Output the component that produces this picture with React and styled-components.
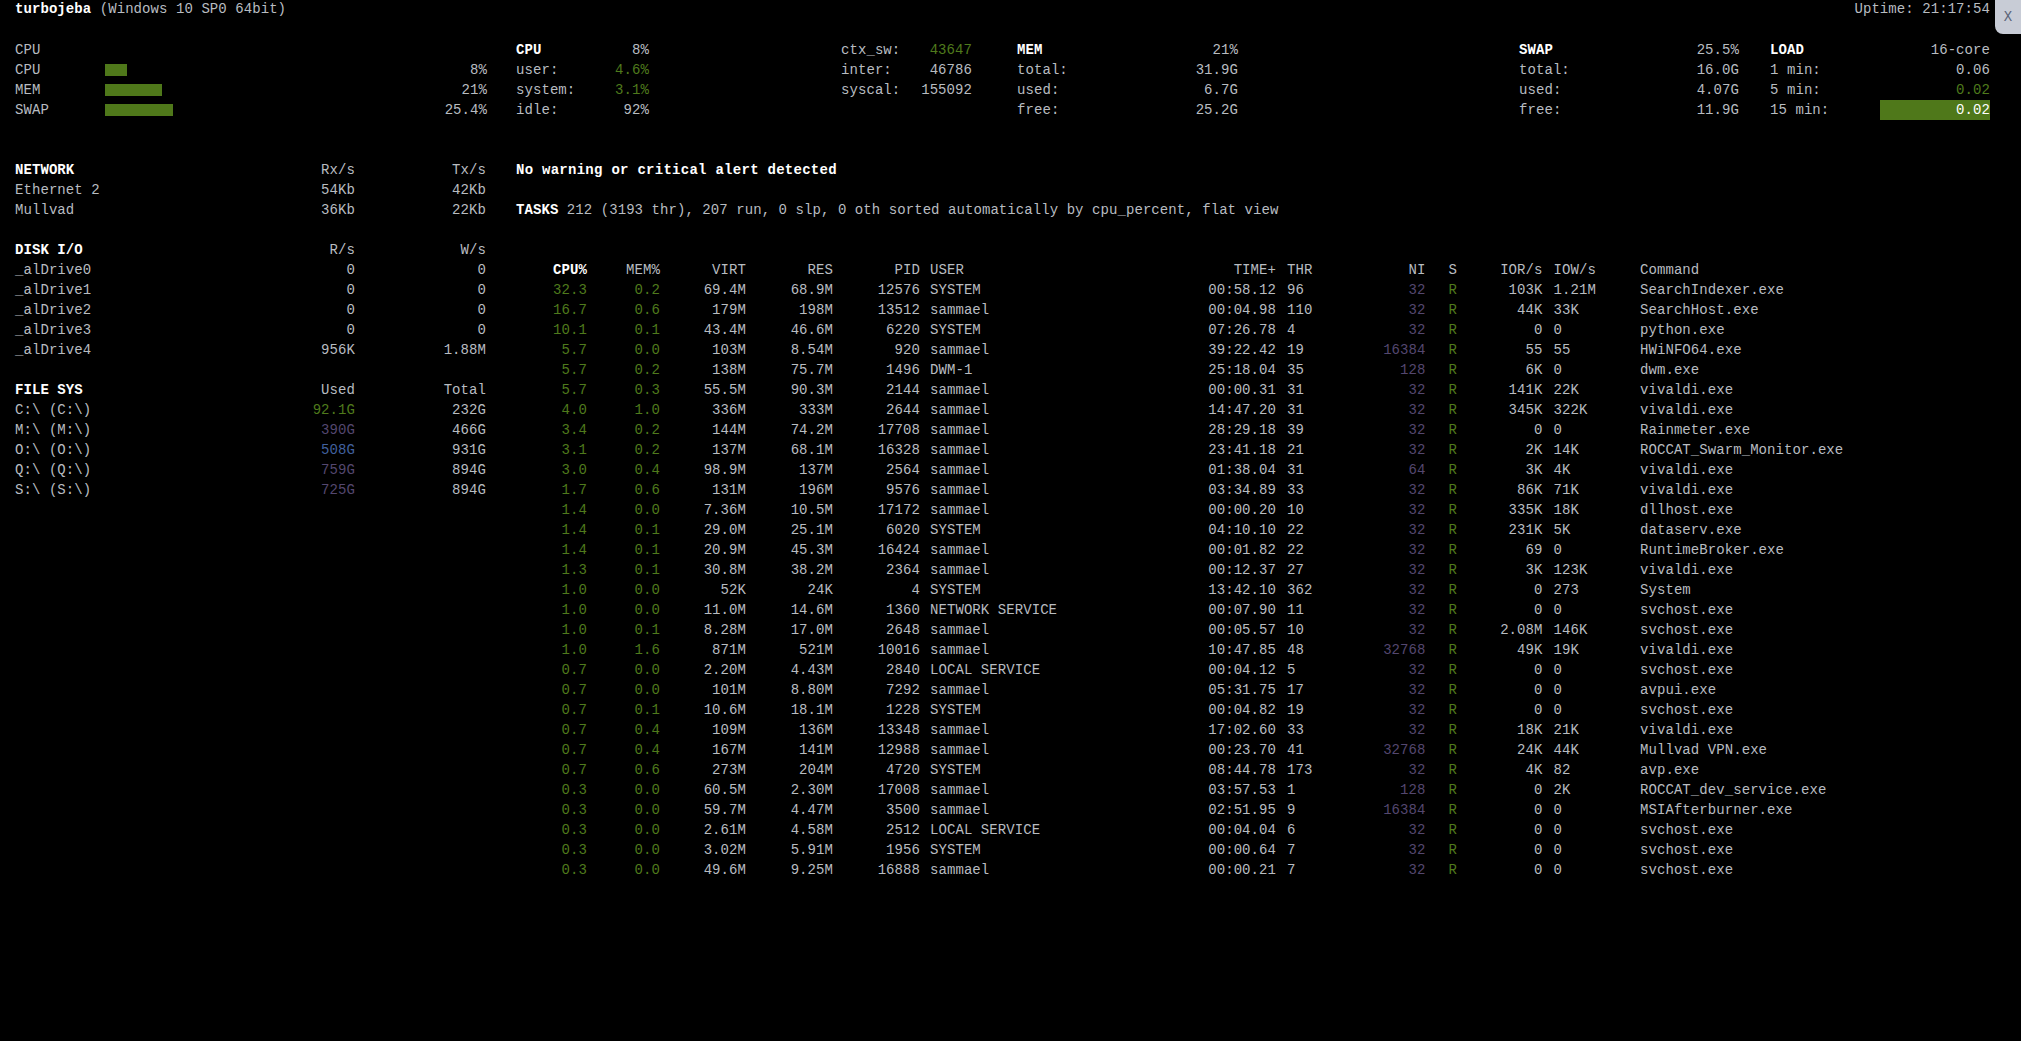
import React from 'react';
import styled, { createGlobalStyle } from 'styled-components';

const colors = {
  text: '#b8bcc0',
  white: '#ffffff',
  ok: '#4f7a1c',
  bar: '#4f781a',
  nice: '#54476f',
  warn: '#54476f',
  info: '#41609f',
};

const GlobalStyle = createGlobalStyle`
  html, body {
    margin: 0;
    padding: 0;
    background: #000;
  }
  body {
    min-height: 1041px;
    color: ${colors.text};
    font-family: "Liberation Mono", "DejaVu Sans Mono", monospace;
    font-size: 14px;
    letter-spacing: 0.07px;
    line-height: 20px;
    overflow: hidden;
  }
`;

const Page = styled.div`
  position: relative;
  width: 2021px;
  height: 1041px;
  background: #000;
  white-space: pre;
`;

const CloseTab = styled.div`
  position: absolute;
  top: 0;
  right: 0;
  width: 26px;
  height: 35px;
  display: flex;
  align-items: center;
  justify-content: center;
  background: #c8ccd6;
  color: #5b6478;
  border-bottom-left-radius: 8px;
`;

const TitleBar = styled.header`
  display: flex;
  justify-content: space-between;
  height: 20px;
  padding: 0 31px 0 15px;
  margin-top: -1px;
`;

const Bold = styled.span`
  color: ${colors.white};
  font-weight: 700;
`;

const AlertText = styled(Bold)`
  letter-spacing: 0.27px;
`;

const StatsRow = styled.section`
  display: flex;
  margin-top: 21px;
  padding-left: 15px;
`;

const StatBlock = styled.div`
  width: ${({ $width }) => $width}px;
  margin-left: ${({ $offset }) => $offset || 0}px;
`;

const StatRow = styled.div`
  display: flex;
  justify-content: space-between;
  height: 20px;
`;

const Value = styled.span`
  color: ${({ $tone }) => ($tone ? colors[$tone] : 'inherit')};
`;

const Highlight = styled.span`
  width: 110px;
  text-align: right;
  background: ${colors.bar};
  color: ${colors.white};
`;

const MeterRow = styled.div`
  display: grid;
  grid-template-columns: 90px 1fr auto;
  align-items: center;
  height: 20px;
`;

const Meter = styled.div`
  height: 12px;
  background: ${colors.bar};
`;

const Main = styled.main`
  display: flex;
  margin-top: 40px;
  padding-left: 15px;
`;

const Sidebar = styled.aside`
  width: 471px;
  flex: none;
`;

const SideSection = styled.div`
  margin-bottom: 20px;
`;

const SideRow = styled.div`
  display: grid;
  grid-template-columns: 1fr 100px 131px;
  height: 20px;
  text-align: right;

  & > :first-child {
    text-align: left;
  }
`;

const Content = styled.div`
  margin-left: 30px;
  flex: 1;
`;

const Line = styled.div`
  height: 20px;
  margin-bottom: ${({ $after }) => $after || 0}px;
`;

const ProcessRow = styled.div`
  display: grid;
  grid-template-columns: 71px 73px 86px 87px 87px 215px 141px 64px 85.5px 64.5px 52.5px 97.5px auto;
  height: 20px;
`;

const Cell = styled.span`
  text-align: ${({ $right }) => ($right ? 'right' : 'left')};
  padding-left: ${({ $pad }) => $pad || 0}px;
  color: ${({ $tone }) => ($tone ? colors[$tone] : 'inherit')};
  font-weight: ${({ $bold }) => ($bold ? 700 : 400)};
`;

const network = [
  ['Ethernet 2', '54Kb', '42Kb'],
  ['Mullvad', '36Kb', '22Kb'],
];

const disks = [
  ['_alDrive0', '0', '0'],
  ['_alDrive1', '0', '0'],
  ['_alDrive2', '0', '0'],
  ['_alDrive3', '0', '0'],
  ['_alDrive4', '956K', '1.88M'],
];

const fileSystems = [
  ['C:\\ (C:\\)', '92.1G', '232G', 'ok'],
  ['M:\\ (M:\\)', '390G', '466G', 'warn'],
  ['O:\\ (O:\\)', '508G', '931G', 'info'],
  ['Q:\\ (Q:\\)', '759G', '894G', 'warn'],
  ['S:\\ (S:\\)', '725G', '894G', 'warn'],
];

const processes = [
  ['32.3', '0.2', '69.4M', '68.9M', '12576', 'SYSTEM', '00:58.12', '96', '32', '103K', '1.21M', 'SearchIndexer.exe'],
  ['16.7', '0.6', '179M', '198M', '13512', 'sammael', '00:04.98', '110', '32', '44K', '33K', 'SearchHost.exe'],
  ['10.1', '0.1', '43.4M', '46.6M', '6220', 'SYSTEM', '07:26.78', '4', '32', '0', '0', 'python.exe'],
  ['5.7', '0.0', '103M', '8.54M', '920', 'sammael', '39:22.42', '19', '16384', '55', '55', 'HWiNFO64.exe'],
  ['5.7', '0.2', '138M', '75.7M', '1496', 'DWM-1', '25:18.04', '35', '128', '6K', '0', 'dwm.exe'],
  ['5.7', '0.3', '55.5M', '90.3M', '2144', 'sammael', '00:00.31', '31', '32', '141K', '22K', 'vivaldi.exe'],
  ['4.0', '1.0', '336M', '333M', '2644', 'sammael', '14:47.20', '31', '32', '345K', '322K', 'vivaldi.exe'],
  ['3.4', '0.2', '144M', '74.2M', '17708', 'sammael', '28:29.18', '39', '32', '0', '0', 'Rainmeter.exe'],
  ['3.1', '0.2', '137M', '68.1M', '16328', 'sammael', '23:41.18', '21', '32', '2K', '14K', 'ROCCAT_Swarm_Monitor.exe'],
  ['3.0', '0.4', '98.9M', '137M', '2564', 'sammael', '01:38.04', '31', '64', '3K', '4K', 'vivaldi.exe'],
  ['1.7', '0.6', '131M', '196M', '9576', 'sammael', '03:34.89', '33', '32', '86K', '71K', 'vivaldi.exe'],
  ['1.4', '0.0', '7.36M', '10.5M', '17172', 'sammael', '00:00.20', '10', '32', '335K', '18K', 'dllhost.exe'],
  ['1.4', '0.1', '29.0M', '25.1M', '6020', 'SYSTEM', '04:10.10', '22', '32', '231K', '5K', 'dataserv.exe'],
  ['1.4', '0.1', '20.9M', '45.3M', '16424', 'sammael', '00:01.82', '22', '32', '69', '0', 'RuntimeBroker.exe'],
  ['1.3', '0.1', '30.8M', '38.2M', '2364', 'sammael', '00:12.37', '27', '32', '3K', '123K', 'vivaldi.exe'],
  ['1.0', '0.0', '52K', '24K', '4', 'SYSTEM', '13:42.10', '362', '32', '0', '273', 'System'],
  ['1.0', '0.0', '11.0M', '14.6M', '1360', 'NETWORK SERVICE', '00:07.90', '11', '32', '0', '0', 'svchost.exe'],
  ['1.0', '0.1', '8.28M', '17.0M', '2648', 'sammael', '00:05.57', '10', '32', '2.08M', '146K', 'svchost.exe'],
  ['1.0', '1.6', '871M', '521M', '10016', 'sammael', '10:47.85', '48', '32768', '49K', '19K', 'vivaldi.exe'],
  ['0.7', '0.0', '2.20M', '4.43M', '2840', 'LOCAL SERVICE', '00:04.12', '5', '32', '0', '0', 'svchost.exe'],
  ['0.7', '0.0', '101M', '8.80M', '7292', 'sammael', '05:31.75', '17', '32', '0', '0', 'avpui.exe'],
  ['0.7', '0.1', '10.6M', '18.1M', '1228', 'SYSTEM', '00:04.82', '19', '32', '0', '0', 'svchost.exe'],
  ['0.7', '0.4', '109M', '136M', '13348', 'sammael', '17:02.60', '33', '32', '18K', '21K', 'vivaldi.exe'],
  ['0.7', '0.4', '167M', '141M', '12988', 'sammael', '00:23.70', '41', '32768', '24K', '44K', 'Mullvad VPN.exe'],
  ['0.7', '0.6', '273M', '204M', '4720', 'SYSTEM', '08:44.78', '173', '32', '4K', '82', 'avp.exe'],
  ['0.3', '0.0', '60.5M', '2.30M', '17008', 'sammael', '03:57.53', '1', '128', '0', '2K', 'ROCCAT_dev_service.exe'],
  ['0.3', '0.0', '59.7M', '4.47M', '3500', 'sammael', '02:51.95', '9', '16384', '0', '0', 'MSIAfterburner.exe'],
  ['0.3', '0.0', '2.61M', '4.58M', '2512', 'LOCAL SERVICE', '00:04.04', '6', '32', '0', '0', 'svchost.exe'],
  ['0.3', '0.0', '3.02M', '5.91M', '1956', 'SYSTEM', '00:00.64', '7', '32', '0', '0', 'svchost.exe'],
  ['0.3', '0.0', '49.6M', '9.25M', '16888', 'sammael', '00:00.21', '7', '32', '0', '0', 'svchost.exe'],
];

const Stat = ({ label, value, tone, bold }) => (
  <StatRow>
    {bold ? <Bold>{label}</Bold> : <span>{label}</span>}
    <Value $tone={tone}>{value}</Value>
  </StatRow>
);

const SideTable = ({ title, left, right, rows }) => (
  <SideSection>
    <SideRow>
      <Bold>{title}</Bold>
      <span>{left}</span>
      <span>{right}</span>
    </SideRow>
    {rows.map(([name, a, b, tone]) => (
      <SideRow key={name}>
        <span>{name}</span>
        <Value $tone={tone}>{a}</Value>
        <span>{b}</span>
      </SideRow>
    ))}
  </SideSection>
);

const ProcessLine = ({ row }) => {
  const [cpu, mem, virt, res, pid, user, time, thr, ni, ior, iow, cmd] = row;
  return (
    <ProcessRow>
      <Cell $right $tone="ok">{cpu}</Cell>
      <Cell $right $tone="ok">{mem}</Cell>
      <Cell $right>{virt}</Cell>
      <Cell $right>{res}</Cell>
      <Cell $right>{pid}</Cell>
      <Cell $pad={10}>{user}</Cell>
      <Cell $right>{time}</Cell>
      <Cell $pad={11}>{thr}</Cell>
      <Cell $right $tone="nice">{ni}</Cell>
      <Cell $pad={23} $tone="ok">R</Cell>
      <Cell $right>{ior}</Cell>
      <Cell $pad={11}>{iow}</Cell>
      <Cell>{cmd}</Cell>
    </ProcessRow>
  );
};

export default function App() {
  return (
    <Page>
      <GlobalStyle />
      <CloseTab>X</CloseTab>

      <TitleBar>
        <span>
          <Bold>turbojeba</Bold> (Windows 10 SP0 64bit)
        </span>
        <span>Uptime: 21:17:54</span>
      </TitleBar>

      <StatsRow>
        <StatBlock $width={472}>
          <StatRow>CPU</StatRow>
          <MeterRow>
            <span>CPU</span>
            <Meter style={{ width: 22 }} />
            <span>8%</span>
          </MeterRow>
          <MeterRow>
            <span>MEM</span>
            <Meter style={{ width: 57 }} />
            <span>21%</span>
          </MeterRow>
          <MeterRow>
            <span>SWAP</span>
            <Meter style={{ width: 68 }} />
            <span>25.4%</span>
          </MeterRow>
        </StatBlock>

        <StatBlock $width={133} $offset={29}>
          <Stat bold label="CPU" value="8%" />
          <Stat label="user:" value="4.6%" tone="ok" />
          <Stat label="system:" value="3.1%" tone="ok" />
          <Stat label="idle:" value="92%" />
        </StatBlock>

        <StatBlock $width={131} $offset={192}>
          <Stat label="ctx_sw:" value="43647" tone="ok" />
          <Stat label="inter:" value="46786" />
          <Stat label="syscal:" value="155092" />
        </StatBlock>

        <StatBlock $width={221} $offset={45}>
          <Stat bold label="MEM" value="21%" />
          <Stat label="total:" value="31.9G" />
          <Stat label="used:" value="6.7G" />
          <Stat label="free:" value="25.2G" />
        </StatBlock>

        <StatBlock $width={220} $offset={281}>
          <Stat bold label="SWAP" value="25.5%" />
          <Stat label="total:" value="16.0G" />
          <Stat label="used:" value="4.07G" />
          <Stat label="free:" value="11.9G" />
        </StatBlock>

        <StatBlock $width={220} $offset={31}>
          <Stat bold label="LOAD" value="16-core" />
          <Stat label="1 min:" value="0.06" />
          <Stat label="5 min:" value="0.02" tone="ok" />
          <StatRow>
            <span>15 min:</span>
            <Highlight>0.02</Highlight>
          </StatRow>
        </StatBlock>
      </StatsRow>

      <Main>
        <Sidebar>
          <SideTable title="NETWORK" left="Rx/s" right="Tx/s" rows={network} />
          <SideTable title="DISK I/O" left="R/s" right="W/s" rows={disks} />
          <SideTable title="FILE SYS" left="Used" right="Total" rows={fileSystems} />
        </Sidebar>

        <Content>
          <Line $after={20}>
            <AlertText>No warning or critical alert detected</AlertText>
          </Line>
          <Line $after={40}>
            <Bold>TASKS</Bold> 212 (3193 thr), 207 run, 0 slp, 0 oth sorted automatically by cpu_percent, flat view
          </Line>
          <ProcessRow>
            <Cell $right $bold $tone="white">CPU%</Cell>
            <Cell $right>MEM%</Cell>
            <Cell $right>VIRT</Cell>
            <Cell $right>RES</Cell>
            <Cell $right>PID</Cell>
            <Cell $pad={10}>USER</Cell>
            <Cell $right>TIME+</Cell>
            <Cell $pad={11}>THR</Cell>
            <Cell $right>NI</Cell>
            <Cell $pad={23}>S</Cell>
            <Cell $right>IOR/s</Cell>
            <Cell $pad={11}>IOW/s</Cell>
            <Cell>Command</Cell>
          </ProcessRow>
          {processes.map((row) => (
            <ProcessLine key={row[4]} row={row} />
          ))}
        </Content>
      </Main>
    </Page>
  );
}
